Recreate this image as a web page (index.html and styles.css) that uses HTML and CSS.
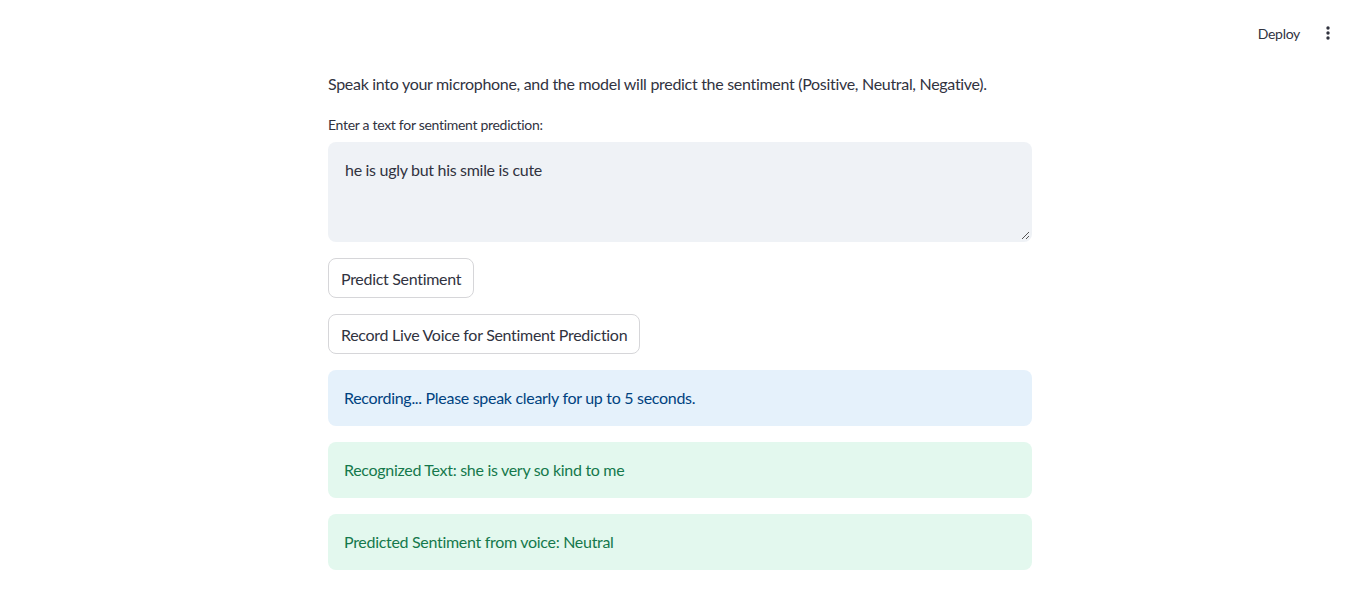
FILE: index.html
```html
<!DOCTYPE html>
<html>
<head>
<meta charset="utf-8">
<link rel="stylesheet" href="styles.css">
</head>
<body>
<header class="topbar">
  <span class="deploy">Deploy</span>
  <span class="kebab" aria-label="menu">
    <svg width="16" height="16" viewBox="0 0 16 16"><circle cx="8" cy="3" r="1.7" fill="#31333f"/><circle cx="8" cy="8" r="1.7" fill="#31333f"/><circle cx="8" cy="13" r="1.7" fill="#31333f"/></svg>
  </span>
</header>
<main class="page">
  <div class="block">
    <p class="intro">Speak into your microphone, and the model will predict the sentiment (Positive, Neutral, Negative).</p>
    <div class="field">
      <label class="label">Enter a text for sentiment prediction:</label>
      <div class="textarea">he is ugly but his smile is cute
        <svg class="grip" width="9" height="9" viewBox="0 0 9 9"><path d="M8 1L1 8M8 5L5 8" stroke="#555" stroke-width="1"/></svg>
      </div>
    </div>
    <div class="btnrow"><button class="btn">Predict Sentiment</button></div>
    <div class="btnrow"><button class="btn">Record Live Voice for Sentiment Prediction</button></div>
    <div class="alert info">Recording... Please speak clearly for up to 5 seconds.</div>
    <div class="alert success">Recognized Text: she is very so kind to me</div>
    <div class="alert success">Predicted Sentiment from voice: Neutral</div>
  </div>
</main>
</body>
</html>
```
FILE: styles.css
```css
* { box-sizing: border-box; }
html, body { margin: 0; padding: 0; background: #fff; }
body {
  font-family: Lato, "Noto Sans", sans-serif;
  color: #31333f;
  width: 1360px;
  letter-spacing: -0.3px;
}
.topbar {
  height: 60px;
  display: flex;
  align-items: center;
  justify-content: flex-end;
  padding: 6px 24px 0 0;
  gap: 20px;
}
.deploy { font-size: 14px; color: #31333f; }
.kebab { display: flex; align-items: center; }
.page {
  display: flex;
  justify-content: center;
}
.block {
  width: 704px;
  display: flex;
  flex-direction: column;
  gap: 16px;
}
.intro {
  margin: 11px 0 0;
  font-size: 16px;
  line-height: 26px;
}
.field { display: flex; flex-direction: column; margin-top: 2px; }
.label {
  font-size: 14px;
  line-height: 20px;
  margin: 0 0 7px;
}
.textarea {
  position: relative;
  height: 100px;
  background: #eff2f6;
  border-radius: 8px;
  padding: 16px 17px;
  font-size: 16px;
  line-height: 24px;
}
.grip { position: absolute; right: 2px; bottom: 2px; }
.btnrow { display: flex; }
.btn {
  font-family: inherit;
  font-size: 16px;
  letter-spacing: -0.3px;
  color: #31333f;
  background: #fff;
  border: 1px solid #d6d6d9;
  border-radius: 8px;
  height: 40px;
  padding: 0 12px;
}
.alert {
  border-radius: 8px;
  height: 56px;
  display: flex;
  align-items: center;
  padding: 0 16px 1px;
  font-size: 16px;
}
.info { background: #e5f1fb; color: #004280; }
.success { background: #e3f8ee; color: #15784c; }
```
